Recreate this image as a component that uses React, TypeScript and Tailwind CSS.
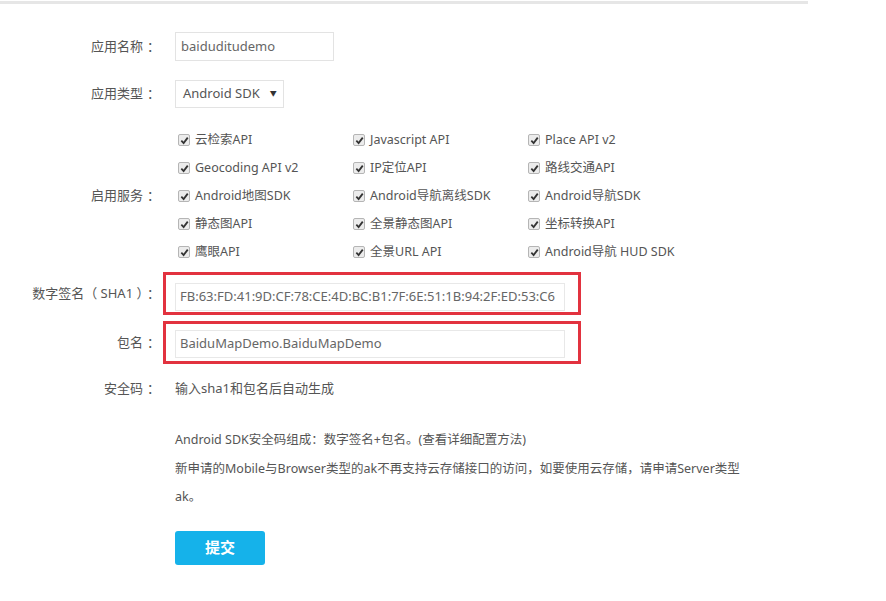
import React from "react";

const services = [
  ["云检索API", "Javascript API", "Place API v2"],
  ["Geocoding API v2", "IP定位API", "路线交通API"],
  ["Android地图SDK", "Android导航离线SDK", "Android导航SDK"],
  ["静态图API", "全景静态图API", "坐标转换API"],
  ["鹰眼API", "全景URL API", "Android导航 HUD SDK"],
];

function Check({ label }: { label: string }) {
  return (
    <div className="flex items-center h-[28px] w-[175px]">
      <span className="ml-[3px] w-[12px] h-[12px] rounded-[2px] border border-[#b5b5b5] bg-[#ececec] flex items-center justify-center">
        <svg width="9" height="9" viewBox="0 0 10 10">
          <path d="M1.5 5.2 L4 7.8 L8.6 1.8" fill="none" stroke="#333" strokeWidth="2" />
        </svg>
      </span>
      <span className="ml-[5px] text-[12.5px] text-[#555]">{label}</span>
    </div>
  );
}

function Label({ text }: { text: string }) {
  return (
    <div className="w-[160px] text-right text-[13px] text-[#555] shrink-0 whitespace-nowrap">
      {text}
      <span className="ml-[4px]">：</span>
    </div>
  );
}

function Row({ label, children, className = "" }: { label: string; children: React.ReactNode; className?: string }) {
  return (
    <div className={"flex items-center " + className}>
      <Label text={label} />
      <div className="ml-[15px]">{children}</div>
    </div>
  );
}

export default function App() {
  return (
    <div
      className="w-[886px] h-[601px] bg-white overflow-hidden"
      style={{ fontFamily: '"Noto Sans", "Noto Sans CJK SC", sans-serif' }}
    >
      <div className="w-[808px] h-[3px] mt-[1px] bg-[#e6e6e6]" />

      <Row label="应用名称" className="mt-[28px]">
        <div className="w-[159px] h-[29px] border border-[#e3e3e3] px-[5px] flex items-center text-[13px] text-[#666]">
          baiduditudemo
        </div>
      </Row>

      <Row label="应用类型" className="mt-[19px]">
        <div className="w-[109px] h-[28px] border border-[#e3e3e3] pl-[7px] flex items-center text-[13px] text-[#555]">
          Android SDK
          <span className="ml-[10px] text-[7px] text-[#333]">▼</span>
        </div>
      </Row>

      <div className="flex items-center mt-[18px]">
        <Label text="启用服务" />
        <div className="ml-[15px]">
          {services.map((row, i) => (
            <div key={i} className="flex">
              {row.map((s) => (
                <Check key={s} label={s} />
              ))}
            </div>
          ))}
        </div>
      </div>

      <Row label="数字签名（ SHA1 ）" className="mt-[6px]">
        <div className="-ml-[12px] w-[418px] h-[43px] border-[3px] border-[#e2323f] pl-[9px] pt-[8px]">
          <div className="w-[390px] h-[28px] border border-[#e8e8e8] px-[4px] flex items-center text-[13px] text-[#666] whitespace-nowrap overflow-hidden">
            FB:63:FD:41:9D:CF:78:CE:4D:BC:B1:7F:6E:51:1B:94:2F:ED:53:C6
          </div>
        </div>
      </Row>

      <Row label="包名" className="mt-[6px]">
        <div className="-ml-[12px] w-[418px] h-[43px] border-[3px] border-[#e2323f] pl-[9px] pt-[6px]">
          <div className="w-[390px] h-[28px] border border-[#e8e8e8] px-[4px] flex items-center text-[13px] text-[#666]">
            BaiduMapDemo.BaiduMapDemo
          </div>
        </div>
      </Row>

      <Row label="安全码" className="mt-[15px]">
        <div className="text-[13px] text-[#555]">输入sha1和包名后自动生成</div>
      </Row>

      <div className="ml-[175px] mt-[26px] w-[620px] text-[12.5px] text-[#555] leading-[29px]">
        <div>Android SDK安全码组成：数字签名+包名。(查看详细配置方法)</div>
        <div>新申请的Mobile与Browser类型的ak不再支持云存储接口的访问，如要使用云存储，请申请Server类型</div>
        <div className="-mt-[1px]">ak。</div>
      </div>

      <button className="ml-[175px] mt-[20px] w-[90px] h-[34px] rounded-[3px] bg-[#15b2ea] text-white text-[15px] font-bold">
        提交
      </button>
    </div>
  );
}
